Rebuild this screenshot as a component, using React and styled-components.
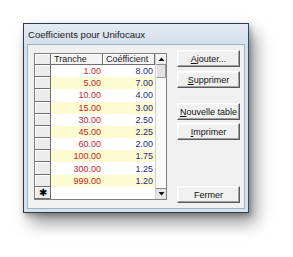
import React from "react";
import styled, { createGlobalStyle } from "styled-components";

const GlobalStyle = createGlobalStyle`
  html, body { margin: 0; padding: 0; background: #ffffff; }
  body { font-family: "Liberation Sans", Arial, sans-serif; }
`;

const Page = styled.div`
  box-sizing: border-box;
  min-height: 257px;
  padding: 23px 0 44px 23px;
`;

const Window = styled.div`
  width: 226px;
  height: 190px;
  box-sizing: border-box;
  border: 1px solid #303c48;
  border-right-color: #1f4f6a;
  background: linear-gradient(#e3ebf4, #d3dfec 22px, #d6e1ed);
  box-shadow: 7px 10px 16px rgba(0, 0, 0, 0.4), 2px 3px 5px rgba(0, 0, 0, 0.25);
  display: flex;
  flex-direction: column;
`;

const TitleBar = styled.div`
  height: 20px;
  display: flex;
  align-items: center;
  padding-left: 4px;
  font-size: 9.6px;
  color: #1a1a1a;
`;

const Client = styled.div`
  flex: 1;
  margin: 0 3px 3px 3px;
  background: #f0f0f0;
  border: 1px solid #9fb3c7;
  display: flex;
  gap: 10px;
  padding: 8px 0 0 6px;
`;

const Grid = styled.div`
  width: 133px;
  height: 147px;
  box-sizing: border-box;
  border: 1px solid #7f7f7f;
  background: #ffffff;
  display: flex;
`;

const Table = styled.div`
  flex: 1;
  display: grid;
  grid-template-columns: 16px 52px 52px;
  grid-template-rows: 11px repeat(11, 1fr);
  font-size: 9px;
`;

const RowHead = styled.div`
  background: #ececec;
  border-right: 1px solid #6f6f6f;
  border-bottom: 1px solid #6f6f6f;
  box-shadow: inset 1px 1px 0 #ffffff;
  display: flex;
  align-items: center;
  justify-content: center;
  font-size: 10px;
  color: #000;
`;

const HeadCell = styled.div`
  background: #f4f4f4;
  border-right: 1px solid #6f6f6f;
  border-bottom: 1px solid #6f6f6f;
  box-shadow: inset 1px 1px 0 #ffffff;
  padding-left: 3px;
  display: flex;
  align-items: center;
  color: #222;
  overflow: hidden;
  white-space: nowrap;
`;

const Cell = styled.div`
  background: ${(p) => (p.$alt ? "#fdfbd2" : "#ffffff")};
  color: ${(p) => p.$color};
  display: flex;
  align-items: center;
  justify-content: flex-end;
  padding-right: ${(p) => p.$pad}px;
`;

const ScrollBar = styled.div`
  width: 11px;
  display: flex;
  flex-direction: column;
  background: #fafafa;
  border-left: 1px solid #d0d0d0;
`;

const ArrowBtn = styled.div`
  height: 11px;
  box-sizing: border-box;
  background: ${(p) => p.$bg};
  border-bottom: ${(p) => (p.$top ? "1px solid #8a8a8a" : "none")};
  border-top: ${(p) => (p.$top ? "none" : "1px solid #8a8a8a")};
  display: flex;
  align-items: center;
  justify-content: center;
`;

const Thumb = styled.div`
  height: 13px;
  box-sizing: border-box;
  background: #e2e2e2;
  border-left: 1px solid #ffffff;
  border-right: 1px solid #9a9a9a;
  border-bottom: 1px solid #9a9a9a;
`;

const Track = styled.div`
  flex: 1;
`;

const Buttons = styled.div`
  display: flex;
  flex-direction: column;
  margin-top: -3px;
`;

const Button = styled.div`
  width: 63px;
  height: 17px;
  box-sizing: border-box;
  margin-top: ${(p) => p.$gap}px;
  background: #f0f0f0;
  border-top: 1px solid #ffffff;
  border-left: 1px solid #ffffff;
  border-right: 1px solid #5a5a5a;
  border-bottom: 1px solid #5a5a5a;
  box-shadow: inset -1px -1px 0 #a0a0a0, inset 1px 1px 0 #f8f8f8;
  font-size: 9px;
  color: #111;
  display: flex;
  align-items: center;
  justify-content: center;
  white-space: nowrap;
`;

const Key = styled.span`
  text-decoration: underline;
`;

const Tri = ({ up }) => (
  <svg width="7" height="4" viewBox="0 0 7 4">
    <path d={up ? "M0.5 4 L3.5 0.5 L6.5 4 Z" : "M0.5 0 L3.5 3.5 L6.5 0 Z"} fill="#111" />
  </svg>
);

const rows = [
  ["1.00", "8.00"],
  ["5.00", "7.00"],
  ["10.00", "4.00"],
  ["15.00", "3.00"],
  ["30.00", "2.50"],
  ["45.00", "2.25"],
  ["60.00", "2.00"],
  ["100.00", "1.75"],
  ["300.00", "1.25"],
  ["999.00", "1.20"],
];

export default function App() {
  return (
    <>
      <GlobalStyle />
      <Page>
        <Window>
          <TitleBar>Coefficients pour Unifocaux</TitleBar>
          <Client>
            <Grid>
              <Table>
                <RowHead />
                <HeadCell>Tranche</HeadCell>
                <HeadCell>Coéfficient</HeadCell>
                {rows.map(([t, c], i) => (
                  <React.Fragment key={t}>
                    <RowHead />
                    <Cell $alt={i % 2 === 1} $color="#c0262c" $pad={2}>
                      {t}
                    </Cell>
                    <Cell $alt={i % 2 === 1} $color="#262a78" $pad={2}>
                      {c}
                    </Cell>
                  </React.Fragment>
                ))}
                <RowHead>✱</RowHead>
                <Cell $color="#000" $pad={0} />
                <Cell $color="#000" $pad={0} />
              </Table>
              <ScrollBar>
                <ArrowBtn $top $bg="#f4f4f4">
                  <Tri up />
                </ArrowBtn>
                <Thumb />
                <Track />
                <ArrowBtn $bg="#e6e6e6">
                  <Tri />
                </ArrowBtn>
              </ScrollBar>
            </Grid>
            <Buttons>
              <Button $gap={0}>
                <Key>A</Key>jouter...
              </Button>
              <Button $gap={4}>
                <Key>S</Key>upprimer
              </Button>
              <Button $gap={15}>
                <Key>N</Key>ouvelle table
              </Button>
              <Button $gap={3}>
                <Key>I</Key>mprimer
              </Button>
              <Button $gap={46}>Fermer</Button>
            </Buttons>
          </Client>
        </Window>
      </Page>
    </>
  );
}
